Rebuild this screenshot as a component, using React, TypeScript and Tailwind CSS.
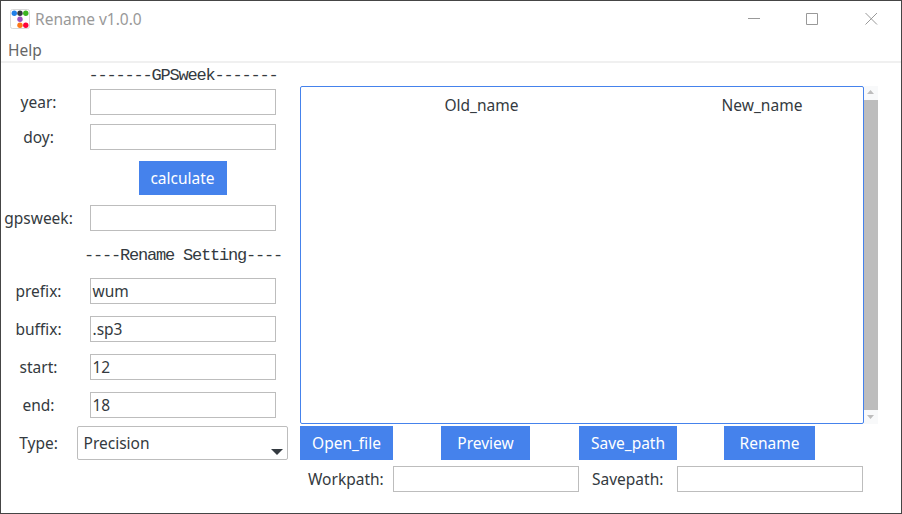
import type { ReactNode } from "react";

function Field({ value = "" }: { value?: string }) {
  return (
    <div className="flex h-[26px] w-[186px] items-center border border-[#bdbdbd] bg-white pl-[2px]">
      {value}
    </div>
  );
}

function Row({ label, className, children }: { label: string; className: string; children: ReactNode }) {
  return (
    <div className={`flex items-center ${className}`}>
      <div className="flex w-[75px] justify-center whitespace-nowrap">{label}</div>
      <div className="flex w-[213px] justify-center">{children}</div>
    </div>
  );
}

function Button({ children, className }: { children: ReactNode; className: string }) {
  return (
    <button className={`flex h-[34px] items-center justify-center bg-[#4582ec] text-white ${className}`}>
      {children}
    </button>
  );
}

function Heading({ children, className }: { children: ReactNode; className: string }) {
  return (
    <div
      className={`flex h-[22px] items-center justify-center whitespace-pre font-['Liberation_Mono',monospace] text-[17px] tracking-[-1.2px] text-[#343a40] ${className}`}
    >
      {children}
    </div>
  );
}

export default function App() {
  return (
    <div className="flex h-[514px] w-[902px] flex-col overflow-hidden border border-[#454545] bg-white font-['Noto_Sans','Open_Sans',sans-serif] text-[15.5px] leading-5 text-[#343a40]">
      <header className="flex h-[36px] shrink-0 items-center pl-[9px] text-[#999999]">
        <svg width="20" height="20" viewBox="0 0 20 20">
          <rect x="0.5" y="0.5" width="19" height="19" rx="2" fill="#fff" stroke="#d9d9d9" />
          <circle cx="4.3" cy="4.2" r="2.7" fill="#2080e8" />
          <circle cx="10" cy="4.2" r="2.7" fill="#343a40" />
          <circle cx="15.8" cy="4.2" r="2.7" fill="#3cb521" />
          <circle cx="10" cy="10.2" r="2.7" fill="#9b50bd" />
          <circle cx="10" cy="16.2" r="2.7" fill="#fd7818" />
          <circle cx="15.8" cy="16.2" r="2.7" fill="#ff0339" />
        </svg>
        <span className="ml-[5px]">Rename v1.0.0</span>
        <svg className="ml-auto mr-[23px]" width="130" height="12" viewBox="0 0 130 12" fill="none" stroke="#999">
          <path d="M0 5.5H12" />
          <path d="M58.5 .5H69.5V11.5H58.5Z" />
          <path d="M117.5 0L129 11.5M129 0L117.5 11.5" />
        </svg>
      </header>
      <nav className="flex h-[26px] shrink-0 items-center border-b-2 border-[#f0f0f0] pl-[7px] pt-[2px] text-[#666]">Help</nav>
      <main className="flex">
        <section className="w-[288px]">
          <Heading className="ml-[76px] mt-[2px] w-[212px]">-------GPSweek-------</Heading>
          <Row label="year:" className="mt-[2px]"><Field /></Row>
          <Row label="doy:" className="mt-[9px]"><Field /></Row>
          <Row label="" className="mt-[11px]"><Button className="w-[88px]">calculate</Button></Row>
          <Row label="gpsweek:" className="mt-[10px]"><Field /></Row>
          <Heading className="ml-[76px] mt-[14px] w-[212px]">----Rename Setting----</Heading>
          <Row label="prefix:" className="mt-[11px]"><Field value="wum" /></Row>
          <Row label="buffix:" className="mt-[12px]"><Field value=".sp3" /></Row>
          <Row label="start:" className="mt-[12px]"><Field value="12" /></Row>
          <Row label="end:" className="mt-[12px]"><Field value="18" /></Row>
          <Row label="Type:" className="mt-[8px]">
            <div className="mr-[1px] flex h-[34px] w-[211px] items-center justify-between rounded-[2px] border border-[#bdbdbd] pl-[6px] pr-[4px]">
              Precision
              <svg className="mt-[17px]" width="12" height="6" viewBox="0 0 12 6">
                <path d="M0 0H12L6 6Z" fill="#343a40" />
              </svg>
            </div>
          </Row>
        </section>
        <section className="ml-[11px] w-[578px] pt-[23px]">
          <div className="flex h-[338px]">
            <div className="flex w-[564px] rounded-[2px] border border-[#4582ec] pt-[8px]">
              <div className="w-[361px] text-center">Old_name</div>
              <div className="w-[200px] text-center">New_name</div>
            </div>
            <div className="flex w-[14px] flex-col items-center justify-between bg-[#f8f9fa]">
              <svg width="14" height="14" viewBox="0 0 14 14"><path d="M3 8L6.5 4L10 8Z" fill="#bdbdbd" /></svg>
              <div className="w-full flex-1 bg-[#bdbdbd]" />
              <svg width="14" height="14" viewBox="0 0 14 14"><path d="M3 5H10L6.5 9Z" fill="#bdbdbd" /></svg>
            </div>
          </div>
          <div className="mt-[2px] flex">
            <Button className="w-[93px]">Open_file</Button>
            <Button className="ml-[48px] w-[89px]">Preview</Button>
            <Button className="ml-[49px] w-[98px]">Save_path</Button>
            <Button className="ml-[47px] w-[91px]">Rename</Button>
          </div>
          <div className="mt-[6px] flex items-center">
            <div className="w-[93px] pl-[8px]">Workpath:</div>
            <Field />
            <div className="w-[98px] pl-[13px]">Savepath:</div>
            <Field />
          </div>
        </section>
      </main>
    </div>
  );
}
